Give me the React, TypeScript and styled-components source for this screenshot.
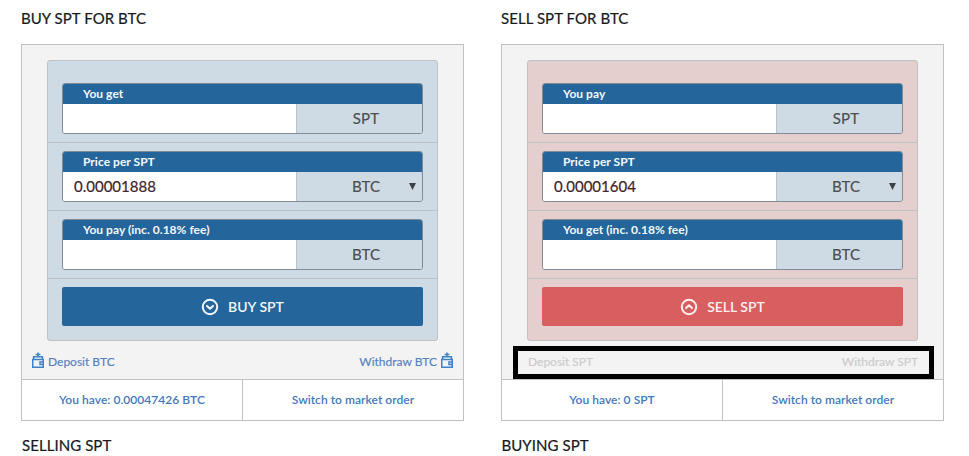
import React from "react";
import styled, { createGlobalStyle } from "styled-components";

type Side = "buy" | "sell";

const BLUE = "#24659b";
const LINE = "#bfc2c5";

const GlobalStyle = createGlobalStyle`
  *, *::before, *::after { box-sizing: border-box; }
  body { margin: 0; background: #fff; overflow: hidden; font-family: Lato, "Liberation Sans", sans-serif; }
  button, input { font: inherit; }
`;

const Page = styled.main`
  display: grid;
  grid-template-columns: 443px 443px;
  column-gap: 37px;
  height: 456px;
  padding-left: 21px;
`;

const Column = styled.section`
  display: flex;
  flex-direction: column;
`;

const Title = styled.h2`
  height: 44px;
  margin: 0;
  padding-top: 8px;
  font-size: 15px;
  line-height: 20px;
  font-weight: 400;
  letter-spacing: 0.06px;
  color: #16191c;
  -webkit-text-stroke: 0.2px currentColor;
`;

const NextTitle = styled(Title)<{ $side: Side }>`
  height: 35px;
  padding: 14px 0 0 ${(p) => (p.$side === "buy" ? "1px" : "0.5px")};
`;

const Panel = styled.div`
  display: flex;
  flex-direction: column;
  height: 377px;
  border: 1px solid #c1c1c1;
  background: #f3f3f3;
`;

const OrderForm = styled.form<{ $side: Side }>`
  display: flex;
  flex: none;
  flex-direction: column;
  height: 281px;
  margin: 15px 25px 0;
  padding-top: 13px;
  border: 1px solid ${LINE};
  border-radius: 3px;
  background: ${(p) => (p.$side === "buy" ? "#cfdbe4" : "#e5cece")};
`;

const FieldRow = styled.div`
  flex: none;
  height: 68px;
  padding: 9px 14px 0;

  & + & {
    border-top: 1px solid ${LINE};
    padding-top: 8px;
  }
`;

const SubmitRow = styled.div`
  flex: 1;
  padding: 8px 14px 0;
  border-top: 1px solid ${LINE};
`;

const Field = styled.label`
  display: flex;
  flex-direction: column;
  height: 51px;
  border: 1px solid #7f8c98;
  border-radius: 3px;
  overflow: hidden;
`;

const FieldLabel = styled.span`
  height: 20px;
  padding-left: 20px;
  background: ${BLUE};
  color: #f3f8fc;
  font-size: 12px;
  line-height: 19px;
  font-weight: 700;
  letter-spacing: 0.03px;
`;

const FieldBody = styled.span`
  display: grid;
  grid-template-columns: 233px 1fr;
  height: 29px;
`;

const Amount = styled.input`
  width: 100%;
  min-width: 0;
  height: 29px;
  padding: 0 0 2px 11px;
  border: 0;
  outline: 0;
  background: #fff;
  color: #3d2427;
  font-size: 15px;
  -webkit-text-stroke: 0.2px currentColor;
`;

const Unit = styled.span`
  display: grid;
  grid-template-columns: 28px 1fr 28px;
  align-items: center;
  justify-items: center;
  height: 29px;
  border-left: 1px solid ${LINE};
  background: #cfdbe4;
  color: #4b4f52;
  font-size: 15px;
  line-height: 26px;
  -webkit-text-stroke: 0.2px currentColor;
`;

const UnitName = styled.span`
  grid-column: 2;
  padding: 0 0 2px 13px;
  letter-spacing: 0.1px;
`;

const Caret = styled.svg`
  width: 7px;
  height: 7px;
  margin: 0 -9px 0 0;
  fill: #3d4144;
`;

const Submit = styled.button<{ $side: Side }>`
  display: flex;
  align-items: center;
  justify-content: center;
  gap: 9px;
  width: 100%;
  height: 39px;
  padding: 0;
  border: 0;
  border-radius: 2px;
  background: ${(p) => (p.$side === "buy" ? BLUE : "#d95e5f")};
  color: ${(p) => (p.$side === "buy" ? "#f1f9ff" : "#fff0f0")};
  font-size: 14px;
  font-weight: 600;
`;

const RoundIcon = styled.svg`
  width: 18px;
  height: 18px;
  fill: none;
  stroke: currentColor;
  stroke-width: 2;
  stroke-linecap: round;
  stroke-linejoin: round;
`;

const Transfers = styled.div`
  display: flex;
  align-items: center;
  justify-content: space-between;
  height: 38px;
  padding: 4px 10px 0 10px;
`;

const MarkedTransfers = styled.div`
  display: flex;
  align-items: center;
  justify-content: space-between;
  height: 33px;
  margin: 5px 9px 0 11px;
  padding: 0 11px 1px 10px;
  border: 5px solid #000;
`;

const TransferLink = styled.a<{ $disabled?: boolean }>`
  display: flex;
  align-items: center;
  gap: 4px;
  color: ${(p) => (p.$disabled ? "#cbcbcb" : "#5480c2")};
  font-size: 12px;
  line-height: 16px;
  -webkit-text-stroke: 0.15px currentColor;
`;

const WalletSvg = styled.svg`
  width: 12px;
  height: 16px;
  margin-top: -4px;
  fill: none;
  stroke: #3d84c6;
  stroke-width: 1.5;
`;

const Footer = styled.div`
  display: grid;
  grid-template-columns: 221px 1fr;
  flex: none;
  height: 41px;
  margin-top: auto;
  border-top: 1px solid #c1c1c1;
  background: #fff;
`;

const FooterLink = styled.a`
  display: flex;
  align-items: center;
  justify-content: center;
  padding-bottom: 1px;
  color: #4178be;
  font-size: 12px;
  font-weight: 600;
  letter-spacing: 0.04px;

  &:first-child {
    border-right: 1px solid #c1c1c1;
  }
`;

const Wallet = () => (
  <WalletSvg viewBox="0 0 12 16">
    <path d="M6 5V.4M3.6 2.4h4.8M1.6 7.2V4.8h8.8v2.4" />
    <path d="M.75 7.5h10.5v7.75H.75z" />
    <path d="M11.3 9.9H8v2.7h3.3" />
  </WalletSvg>
);

interface Row {
  label: string;
  unit: string;
  value?: string;
  menu?: boolean;
}

interface OrderProps {
  side: Side;
  title: string;
  next: string;
  rows: Row[];
  action: string;
  balance: string;
}

const Order = ({ side, title, next, rows, action, balance }: OrderProps) => (
  <Column>
    <Title>{title}</Title>
    <Panel>
      <OrderForm $side={side}>
        {rows.map((row) => (
          <FieldRow key={row.label}>
            <Field>
              <FieldLabel>{row.label}</FieldLabel>
              <FieldBody>
                <Amount defaultValue={row.value ?? ""} />
                <Unit>
                  <UnitName>{row.unit}</UnitName>
                  {row.menu && (
                    <Caret viewBox="0 0 7 7">
                      <path d="M0 0h7L3.5 7z" />
                    </Caret>
                  )}
                </Unit>
              </FieldBody>
            </Field>
          </FieldRow>
        ))}
        <SubmitRow>
          <Submit type="button" $side={side}>
            <RoundIcon viewBox="0 0 18 18">
              <circle cx="9" cy="9" r="7.2" />
              <path d={side === "buy" ? "M6 7.9l3 2.8 3-2.8" : "M6 10.1l3-2.8 3 2.8"} />
            </RoundIcon>
            {action}
          </Submit>
        </SubmitRow>
      </OrderForm>
      {side === "buy" ? (
        <Transfers>
          <TransferLink>
            <Wallet />
            Deposit BTC
          </TransferLink>
          <TransferLink>
            Withdraw BTC
            <Wallet />
          </TransferLink>
        </Transfers>
      ) : (
        <MarkedTransfers>
          <TransferLink $disabled>Deposit SPT</TransferLink>
          <TransferLink $disabled>Withdraw SPT</TransferLink>
        </MarkedTransfers>
      )}
      <Footer>
        <FooterLink>{balance}</FooterLink>
        <FooterLink>Switch to market order</FooterLink>
      </Footer>
    </Panel>
    <NextTitle $side={side}>{next}</NextTitle>
  </Column>
);

export default function App() {
  return (
    <>
      <GlobalStyle />
      <Page>
        <Order
          side="buy"
          title="BUY SPT FOR BTC"
          next="SELLING SPT"
          action="BUY SPT"
          balance="You have: 0.00047426 BTC"
          rows={[
            { label: "You get", unit: "SPT" },
            { label: "Price per SPT", unit: "BTC", value: "0.00001888", menu: true },
            { label: "You pay (inc. 0.18% fee)", unit: "BTC" },
          ]}
        />
        <Order
          side="sell"
          title="SELL SPT FOR BTC"
          next="BUYING SPT"
          action="SELL SPT"
          balance="You have: 0 SPT"
          rows={[
            { label: "You pay", unit: "SPT" },
            { label: "Price per SPT", unit: "BTC", value: "0.00001604", menu: true },
            { label: "You get (inc. 0.18% fee)", unit: "BTC" },
          ]}
        />
      </Page>
    </>
  );
}
